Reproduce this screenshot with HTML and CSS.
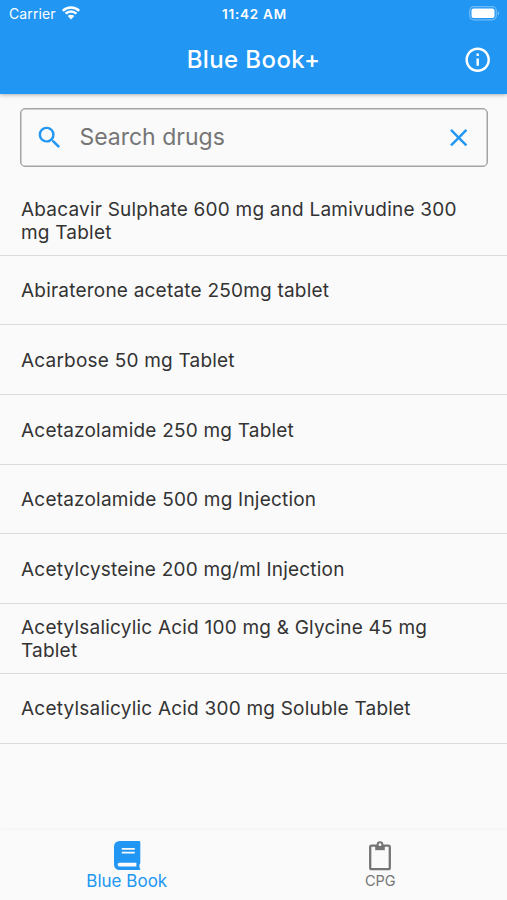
FILE: index.html
```html
<!DOCTYPE html>
<html lang="en">

<head>
    <meta charset="UTF-8">
    <meta name="viewport" content="width=device-width, initial-scale=1.0">
    <title>Blue Book+</title>
    <link rel="stylesheet" href="styles.css">
</head>

<body>
    <header class="header">
        <div class="status-bar">
            <div class="carrier">
                <span class="carrier-name">Carrier</span>
                <svg class="wifi" viewBox="0 0 20 15">
                    <path d="M1.8 5.8a11.6 11.6 0 0 1 16.4 0M4.6 8.7a7.6 7.6 0 0 1 10.8 0" fill="none" stroke="#fff" stroke-width="2.5"/>
                    <path d="M6.7 11.1a4.7 4.7 0 0 1 6.6 0L10 14.4z" fill="#fff"/>
                </svg>
            </div>
            <span class="time">11:42 AM</span>
            <svg class="battery" viewBox="0 0 31 15">
                <rect x=".7" y=".7" width="26.6" height="13.1" rx="4" fill="none" stroke="#fff" stroke-opacity=".35" stroke-width="1.2"/>
                <rect x="2.5" y="2.5" width="23" height="9.5" rx="2" fill="#fff"/>
                <path d="M28.8 5v4.6c1.8-.9 1.8-3.7 0-4.6z" fill="#fff" fill-opacity=".4"/>
            </svg>
        </div>
        <div class="app-bar">
            <h1 class="title">Blue Book+</h1>
            <svg class="icon info" viewBox="0 0 24 24">
                <path d="M11 7h2v2h-2zm0 4h2v6h-2zm1-9C6.48 2 2 6.48 2 12s4.48 10 10 10 10-4.48 10-10S17.52 2 12 2zm0 18c-4.41 0-8-3.59-8-8s3.59-8 8-8 8 3.59 8 8-3.59 8-8 8z"/>
            </svg>
        </div>
    </header>

    <main class="content">
        <div class="search-box">
            <svg class="icon" viewBox="0 0 24 24">
                <path d="M15.5 14h-.79l-.28-.27A6.47 6.47 0 0 0 16 9.5 6.5 6.5 0 1 0 9.5 16c1.61 0 3.09-.59 4.23-1.57l.27.28v.79l5 4.99L20.49 19l-4.99-5zm-6 0C7.01 14 5 11.99 5 9.5S7.01 5 9.5 5 14 7.01 14 9.5 11.99 14 9.5 14z"/>
            </svg>
            <input type="text" class="search-input" placeholder="Search drugs" aria-label="Search drugs">
            <svg class="icon" viewBox="0 0 24 24">
                <path d="M19 6.41 17.59 5 12 10.59 6.41 5 5 6.41 10.59 12 5 17.59 6.41 19 12 13.41 17.59 19 19 17.59 13.41 12z"/>
            </svg>
        </div>

        <ul class="drug-list">
            <li class="drug">Abacavir Sulphate 600 mg and Lamivudine 300<br>mg Tablet</li>
            <li class="drug">Abiraterone acetate 250mg tablet</li>
            <li class="drug">Acarbose 50 mg Tablet</li>
            <li class="drug">Acetazolamide 250 mg Tablet</li>
            <li class="drug">Acetazolamide 500 mg Injection</li>
            <li class="drug">Acetylcysteine 200 mg/ml Injection</li>
            <li class="drug">Acetylsalicylic Acid 100 mg &amp; Glycine 45 mg<br>Tablet</li>
            <li class="drug">Acetylsalicylic Acid 300 mg Soluble Tablet</li>
        </ul>
    </main>

    <nav class="bottom-nav">
        <a class="tab active" href="#">
            <svg class="tab-icon" viewBox="0 0 28 30">
                <path fill-rule="evenodd" d="M6.5 0H26a1.3 1.3 0 0 1 1.3 1.3V22a1.5 1.5 0 0 1-.7 1.2c-.3 1.1-.3 2.5 0 3.5a1.2 1.2 0 0 1-.5 2.3H6.5A5.5 5.5 0 0 1 1 23.5v-18A5.5 5.5 0 0 1 6.5 0zM8.8 7v1.8h13V7zM8.8 10.8v1.8h13v-1.8zM6.5 21.7a1.9 1.9 0 0 0 0 3.8h16.9v-3.8z"/>
            </svg>
            <span class="tab-label">Blue Book</span>
        </a>
        <a class="tab" href="#">
            <svg class="tab-icon" viewBox="0 0 28 30">
                <rect x="4.2" y="4.7" width="19.6" height="23.5" rx="1.5" fill="none" stroke="currentColor" stroke-width="2.3"/>
                <rect x="9.2" y="4" width="9.6" height="5.2"/>
                <circle cx="14" cy="3.7" r="2.4" fill="#fafafa" stroke="currentColor" stroke-width="2"/>
            </svg>
            <span class="tab-label">CPG</span>
        </a>
    </nav>
</body>

</html>
```
FILE: styles.css
```css
* {
    box-sizing: border-box;
}

body {
    display: flex;
    flex-direction: column;
    height: 900px;
    margin: 0;
    background-color: #fafafa;
    color: #333;
    font-family: Inter, Roboto, sans-serif;
}

.header {
    height: 94px;
    background-color: #2196f3;
    color: #fff;
    box-shadow: 0 1px 4px rgba(0, 0, 0, 0.3);
}

.status-bar {
    display: grid;
    grid-template-columns: 1fr auto 1fr;
    align-items: center;
    height: 26px;
    padding: 1px 7px 0 9px;
    font-size: 14px;
}

.carrier {
    display: flex;
    align-items: center;
    gap: 5px;
}

.carrier-name {
    letter-spacing: 0.1px;
}

.wifi {
    width: 20px;
    height: 15px;
    margin-top: -2px;
}

.time {
    font-size: 13.5px;
    font-weight: 600;
    letter-spacing: 0.75px;
}

.battery {
    width: 31px;
    height: 15px;
    justify-self: end;
}

.app-bar {
    display: grid;
    grid-template-columns: 1fr auto 1fr;
    align-items: center;
    height: 68px;
    padding: 0 15px;
}

.title {
    grid-column: 2;
    margin: 0 0 2px;
    font-size: 24px;
    font-weight: 500;
    letter-spacing: 0.4px;
}

.icon {
    flex: none;
    width: 29.4px;
    height: 29.4px;
    fill: #2196f3;
}

.info {
    justify-self: end;
    fill: #fff;
}

.content {
    flex: 1;
}

.search-box {
    display: flex;
    align-items: center;
    height: 59px;
    margin: 14px 19px 0 20px;
    padding: 0 14px;
    border: 1px solid #a4a4a4;
    border-radius: 5px;
    box-shadow: inset 0 0 0 0.5px #a4a4a4;
}

.search-input {
    flex: 1;
    min-width: 0;
    margin-left: 15px;
    padding: 0 0 2px;
    border: none;
    outline: none;
    background: none;
    font-family: inherit;
    font-size: 23px;
}

.search-input::placeholder {
    color: #757575;
}

.drug-list {
    margin: 19px 0 0;
    padding: 0;
    list-style: none;
}

.drug {
    display: grid;
    align-content: center;
    height: 69.7px;
    padding: 1.5px 21px 0;
    border-bottom: 1px solid #dcdcdc;
    font-size: 19px;
    letter-spacing: 0.21px;
    line-height: 23px;
}

.bottom-nav {
    display: flex;
    height: 70px;
    box-shadow: 0 -1px 3px rgba(0, 0, 0, 0.04);
}

.tab {
    display: flex;
    flex: 1;
    flex-direction: column;
    align-items: center;
    padding-top: 11px;
    color: #757575;
    font-size: 14.5px;
    line-height: 20px;
    text-decoration: none;
}

.tab-icon {
    width: 28px;
    height: 30px;
    fill: currentColor;
}

.active {
    color: #2196f3;
    font-size: 17px;
}
```
